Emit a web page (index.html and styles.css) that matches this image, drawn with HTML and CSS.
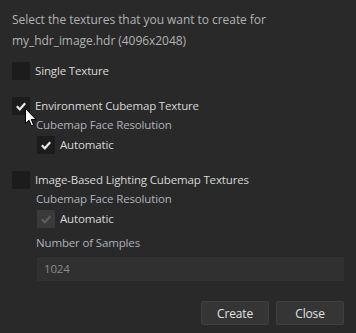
FILE: index.html
```html
<!DOCTYPE html>
<html lang="en">
<head>
    <meta charset="UTF-8">
    <title>Create Textures</title>
    <link rel="stylesheet" href="styles.css">
</head>
<body>
    <div class="dialog">
        <p class="intro">Select the textures that you want to create for<br>my_hdr_image.hdr (4096x2048)</p>

        <div class="group first">
            <label class="option">
                <span class="box"></span>
                <span>Single Texture</span>
            </label>
        </div>

        <div class="group">
            <label class="option">
                <span class="box checked">
                    <svg viewBox="0 0 18 18"><path d="M4.8 9.3 L7.8 12.3 L13.2 6.3"/></svg>
                </span>
                <span>Environment Cubemap Texture</span>
            </label>
            <div class="sub">
                <div class="sub-label">Cubemap Face Resolution</div>
                <label class="option small">
                    <span class="box checked">
                        <svg viewBox="0 0 18 18"><path d="M4.8 9.3 L7.8 12.3 L13.2 6.3"/></svg>
                    </span>
                    <span>Automatic</span>
                </label>
            </div>
        </div>

        <div class="group">
            <label class="option">
                <span class="box"></span>
                <span>Image-Based Lighting Cubemap Textures</span>
            </label>
            <div class="sub">
                <div class="sub-label">Cubemap Face Resolution</div>
                <label class="option small disabled">
                    <span class="box checked">
                        <svg viewBox="0 0 18 18"><path d="M4.8 9.3 L7.8 12.3 L13.2 6.3"/></svg>
                    </span>
                    <span>Automatic</span>
                </label>
                <div class="sub-label samples">Number of Samples</div>
                <div class="field">1024</div>
            </div>
        </div>

        <div class="buttons">
            <button class="btn">Create</button>
            <button class="btn">Close</button>
        </div>
    </div>

    <!-- mouse pointer over the first checkbox -->
    <svg class="cursor" viewBox="0 0 12 19" width="12" height="19">
        <path d="M0.5 0.5 L0.5 15.5 L4 12.2 L6.4 17.8 L8.6 16.9 L6.2 11.4 L11 11.4 Z"/>
    </svg>
</body>
</html>
```

FILE: styles.css
```css
body {
    margin: 0;
    background-color: #292929;
    font-family: "Open Sans", "Noto Sans", sans-serif;
    font-size: 11.5px;
    letter-spacing: -0.15px;
    color: #d8d8d8;
    position: relative;
    height: 333px;
    overflow: hidden;
}

.dialog {
    padding: 9px 12px 0;
}

.intro {
    margin: 0;
    line-height: 21px;
    font-size: 12px;
    letter-spacing: -0.05px;
    color: #b2b2b2;
}

.group {
    margin-top: 17px;
}

.group.first {
    margin-top: 11px;
}

.option {
    display: flex;
    align-items: center;
    gap: 5px;
    height: 18px;
    line-height: 18px;
}

.box {
    width: 18px;
    height: 18px;
    background-color: #1c1c1c;
    display: flex;
    flex-shrink: 0;
}

.box svg {
    width: 18px;
    height: 18px;
}

.box path {
    fill: none;
    stroke: #e6e6e6;
    stroke-width: 2.2;
}

.sub {
    padding-left: 24px;
}

.sub-label {
    margin-top: 1px;
    height: 18px;
    line-height: 18px;
    color: #aeb2ba;
}

.option.small {
    margin-top: 2px;
    margin-left: 1px;
}

.option.disabled .box {
    background-color: #3a3a3a;
}

.option.disabled .box path {
    stroke: #5c5c5c;
}

.sub-label.samples {
    margin-top: 6px;
}

.field {
    margin-top: 5px;
    margin-left: 1px;
    height: 24px;
    line-height: 24px;
    padding-left: 7px;
    background-color: #303030;
    color: #8a8a8a;
}

.buttons {
    margin-top: 20px;
    display: flex;
    justify-content: flex-end;
    gap: 7px;
}

.btn {
    width: 68px;
    height: 24px;
    padding: 0;
    background-color: #353535;
    border: 1px solid #3f3f3f;
    border-radius: 2px;
    color: #e2e2e2;
    font-family: inherit;
    font-size: 12px;
    letter-spacing: inherit;
}

.cursor {
    position: absolute;
    left: 25px;
    top: 108px;
}

.cursor path {
    fill: #ffffff;
    stroke: #000000;
    stroke-width: 1;
}
```
